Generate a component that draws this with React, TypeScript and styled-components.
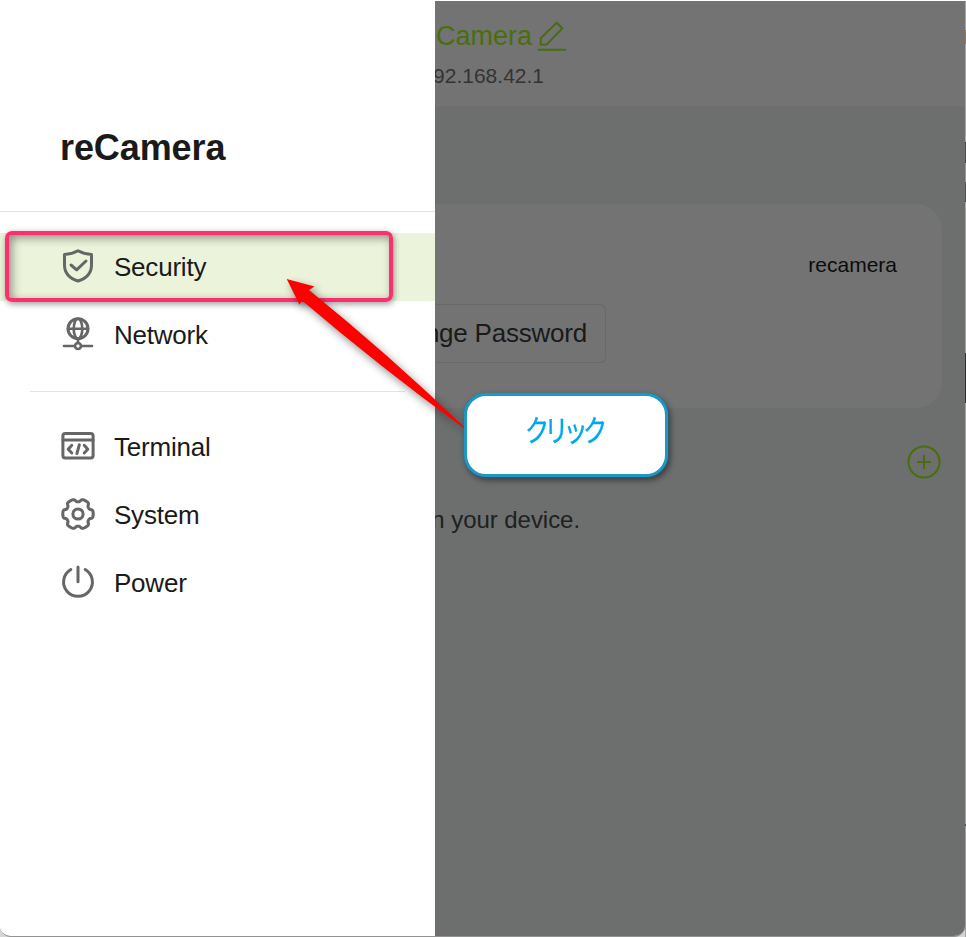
import React from "react";
import styled, { createGlobalStyle } from "styled-components";

const GlobalStyle = createGlobalStyle`
  * { box-sizing: border-box; }
  body { margin: 0; background: #d9d9d9; font-family: "Liberation Sans", Arial, sans-serif; color: #1a1a1a; }
`;

const Desktop = styled.div`
  position: relative;
  width: 966px;
  height: 937px;
  padding-top: 1px;
  overflow: hidden;
  display: grid;
  grid-template-columns: 965px 1px;
  background: linear-gradient(#ffffff 0 1px, #d6d6d6 1px);
`;

const Window = styled.div`
  display: grid;
  grid-template-columns: 435px 530px;
  height: 936px;
  border-radius: 0 0 11px 11px;
  border-bottom: 1px solid #929292;
  overflow: hidden;
`;

const DesktopEdge = styled.div`
  height: 936px;
  background: linear-gradient(
    #a9a9a9 0 29px, #9b7a4c 29px 43px, #a9a9a9 43px 141px, #4d4d4d 141px 162px,
    #989898 162px 181px, #555 181px 201px, #a9aba9 201px 352px, #303030 352px 402px,
    #a9aba9 402px 823px, #555 823px 825px, #a0a0a0 825px
  );
`;

const Drawer = styled.aside`
  background: #fff;
  display: flex;
  flex-direction: column;
`;

const DrawerTitle = styled.h1`
  margin: 0;
  height: 211px;
  padding: 125px 0 0 60px;
  border-bottom: 1px solid #e3e3e3;
  font-size: 36px;
  line-height: 44px;
  letter-spacing: -0.1px;
`;

const MenuGroup = styled.nav`
  padding: 21px 0;

  &:first-of-type {
    padding-bottom: 22px;
  }
`;

const MenuItem = styled.div<{ $active?: boolean }>`
  height: 68px;
  padding-left: 60px;
  display: flex;
  align-items: center;
  gap: 18px;
  font-size: 26px;
  letter-spacing: -0.22px;
  background: ${(p) => (p.$active ? "#ebf4da" : "transparent")};
`;

const MenuIcon = styled.svg`
  width: 36px;
  height: 36px;
  margin-top: -2px;
  fill: none;
  stroke: #666;
  stroke-width: 3;
  stroke-linecap: round;
  stroke-linejoin: round;
`;

const MenuDivider = styled.hr`
  margin: 0 30px;
  border: 0;
  width: 375px;
  height: 1px;
  flex: none;
  background: #e3e3e3;
`;

const Content = styled.main`
  background: #6c6f6e;
  overflow: hidden;
`;

const Header = styled.header`
  height: 105px;
  background: #737373;
  padding-top: 18px;
`;

const DeviceName = styled.div`
  width: 132px;
  height: 33px;
  display: flex;
  justify-content: flex-end;
  align-items: flex-start;
  gap: 5px;
  font-size: 27px;
  line-height: 34px;
  color: #4a6e0c;
`;

const DeviceAddress = styled.div`
  width: 109px;
  margin-top: 11px;
  display: flex;
  justify-content: flex-end;
  font-size: 21px;
  line-height: 26px;
  color: #333;
`;

const Card = styled.section`
  width: 507px;
  height: 204px;
  margin-top: 98px;
  padding: 47px 45px 0 0;
  border-radius: 0 26px 26px 0;
  background: #737373;
`;

const UserName = styled.div`
  text-align: right;
  font-size: 21px;
  line-height: 28px;
  color: #0b0b0b;
`;

const PasswordButton = styled.div`
  width: 171px;
  height: 59px;
  margin-top: 25px;
  padding-right: 18px;
  display: flex;
  justify-content: flex-end;
  align-items: center;
  border: 1px solid #696969;
  border-left: 0;
  border-radius: 0 6px 6px 0;
  font-size: 26px;
  letter-spacing: -0.22px;
  white-space: nowrap;
`;

const AddRow = styled.div`
  width: 507px;
  margin-top: 36px;
  display: flex;
  justify-content: flex-end;
`;

const KeyHint = styled.div`
  width: 145px;
  margin-top: 25px;
  display: flex;
  justify-content: flex-end;
  font-size: 24px;
  line-height: 30px;
  letter-spacing: -0.05px;
  white-space: nowrap;
  color: #202020;
`;

const LineIcon = styled.svg`
  display: block;
  flex: none;
  fill: none;
  stroke: #4a6e0c;
  stroke-width: 2.1;
  stroke-linejoin: round;
`;

const Highlight = styled.div`
  position: absolute;
  left: 5px;
  top: 231px;
  width: 388px;
  height: 71px;
  border: 4px solid #ff2e6c;
  border-radius: 7px;
  box-shadow: 1px 2px 6px rgba(0, 0, 0, 0.4), inset 3px 3px 10px rgba(0, 0, 0, 0.4);
`;

const Arrow = styled.svg`
  position: absolute;
  left: 280px;
  top: 270px;
  filter: drop-shadow(3px 4px 4px rgba(0, 0, 0, 0.45));
`;

const Callout = styled.div`
  position: absolute;
  left: 464px;
  top: 393px;
  width: 204px;
  height: 84px;
  border: 3px solid #1f97c4;
  border-radius: 22px;
  background: #fff;
  box-shadow: 0 0 2px #1788b3, 2px 3px 6px rgba(0, 0, 0, 0.5);
  display: flex;
  justify-content: center;
`;

const CalloutText = styled.span`
  margin: 12px 0 0 -5px;
  font-family: "Noto Sans CJK JP", sans-serif;
  font-size: 30px;
  line-height: 40px;
  letter-spacing: -6.2px;
  color: #00a8ec;
  -webkit-text-stroke: 0.4px #00a8ec;
  white-space: nowrap;
  transform: scaleX(0.81);
`;

const gearPoints = Array.from({ length: 180 }, (_, i) => {
  const a = (i * Math.PI) / 90;
  const r = 13.6 + 1.6 * Math.tanh(2.4 * (Math.cos(6 * a) + 0.4));
  return `${(18 + r * Math.cos(a)).toFixed(2)},${(18 + r * Math.sin(a)).toFixed(2)}`;
}).join(" ");

const ShieldIcon = () => (
  <MenuIcon viewBox="0 0 36 36">
    <path d="M18 2.8C14 5 9 6.2 4.5 6.5V17C4.5 25 10 30.5 18 33C26 30.5 31.5 25 31.5 17V6.5C27 6.2 22 5 18 2.8Z" />
    <path d="M11 17L16.6 21.8L26 13" />
  </MenuIcon>
);

const NetworkIcon = () => (
  <MenuIcon viewBox="0 0 36 36">
    <circle cx="18" cy="12.7" r="10" />
    <ellipse cx="18" cy="12.7" rx="4.3" ry="10" strokeWidth="2.6" />
    <path d="M8 12.7H28M18 23V27M4 30H14.5M21.5 30H32" strokeWidth="2.6" />
    <circle cx="18" cy="30" r="3" strokeWidth="2.7" />
  </MenuIcon>
);

const TerminalIcon = () => (
  <MenuIcon viewBox="0 0 36 36">
    <rect x="2.9" y="5.6" width="30.2" height="24.4" rx="2.4" />
    <path d="M3 12H33" />
    <path d="M11.8 17.3L8.2 21.2L11.8 25M24.2 17.3L27.8 21.2L24.2 25M19.3 16.8L16.9 25.6" />
  </MenuIcon>
);

const SystemIcon = () => (
  <MenuIcon viewBox="0 0 36 36">
    <polygon points={gearPoints} />
    <circle cx="18" cy="18" r="5.1" />
  </MenuIcon>
);

const PowerIcon = () => (
  <MenuIcon viewBox="0 0 36 36">
    <path d="M10.8 5.5A14.4 14.4 0 1 0 25.2 5.5M18 3V17.8" />
  </MenuIcon>
);

export default function App() {
  return (
    <Desktop>
      <GlobalStyle />
      <Window>
        <Drawer>
          <DrawerTitle>reCamera</DrawerTitle>
          <MenuGroup>
            <MenuItem $active><ShieldIcon />Security</MenuItem>
            <MenuItem><NetworkIcon />Network</MenuItem>
          </MenuGroup>
          <MenuDivider />
          <MenuGroup>
            <MenuItem><TerminalIcon />Terminal</MenuItem>
            <MenuItem><SystemIcon />System</MenuItem>
            <MenuItem><PowerIcon />Power</MenuItem>
          </MenuGroup>
        </Drawer>
        <Content>
          <Header>
            <DeviceName>
              <span>Camera</span>
              <LineIcon width="30" height="33" viewBox="0 0 30 33">
                <path d="M3.7 25.5V19.2L19.7 3.7L25.3 9.3L9.7 25.5Z" />
                <path d="M1.5 30.8H28.2" strokeLinecap="round" />
              </LineIcon>
            </DeviceName>
            <DeviceAddress>92.168.42.1</DeviceAddress>
          </Header>
          <Card>
            <UserName>recamera</UserName>
            <PasswordButton>nge Password</PasswordButton>
          </Card>
          <AddRow>
            <LineIcon width="36" height="36" viewBox="0 0 36 36">
              <circle cx="18" cy="18" r="15.5" />
              <path d="M11 18H25M18 11V25" />
            </LineIcon>
          </AddRow>
          <KeyHint>n your device.</KeyHint>
        </Content>
      </Window>
      <DesktopEdge />
      <Highlight />
      <Arrow width="200" height="180" viewBox="280 270 200 180">
        <path d="M286.7 279L314.5 286.5L309 290Q388 354 464.2 427L463.2 427.8Q380 367 302 300.5L299.5 304.7Z" fill="#f00" />
      </Arrow>
      <Callout>
        <CalloutText>クリック</CalloutText>
      </Callout>
    </Desktop>
  );
}
